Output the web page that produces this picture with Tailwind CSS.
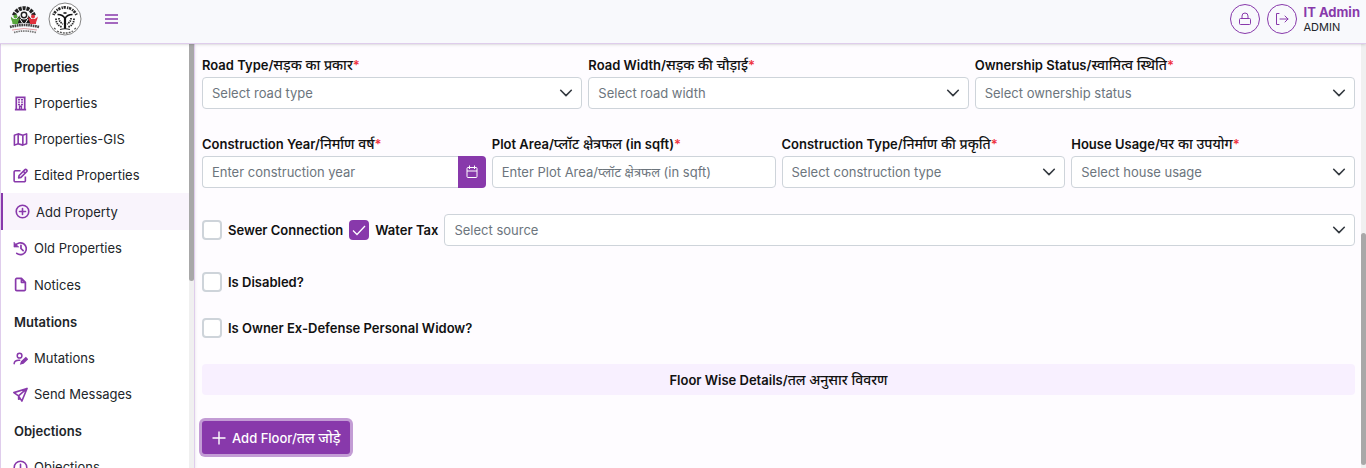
<!DOCTYPE html>
<html lang="en">
<head>
<meta charset="utf-8">
<title>Add Property</title>
<script src="https://cdn.jsdelivr.net/npm/@tailwindcss/browser@4"></script>
</head>
<body class="h-screen overflow-hidden flex flex-col bg-[#fefcff] font-['Inter','Noto_Sans_Devanagari','Noto_Sans',sans-serif] text-[13px] leading-[18px] text-[#212529]">
<svg class="hidden">
  <symbol id="chev" viewBox="0 0 16 16"><path d="M2.7 5.3 8 10.6l5.3-5.3" fill="none" stroke="#343a40" stroke-width="1.6" stroke-linecap="round" stroke-linejoin="round"/></symbol>
</svg>
<header class="relative z-10 h-[44px] shrink-0 flex items-center bg-[#f8f9fc] border-b border-[#dfcdec] shadow-sm pl-2 pr-[6px] pb-[6px]">
  <svg class="w-8 h-8" viewBox="0 0 32 32" role="img" aria-label="Municipal corporation logo">
    <path d="M6 12.500a10.500 10.500 0 0 1 20 0" fill="none" stroke="#222" stroke-width="4" stroke-dasharray="3 .9"/>
    <path d="M8 21c-1-4 2-6 4-9l8 0c2 3 5 5 4 9q-8-2-16 0z" fill="#1b1b1b"/>
    <circle cx="16" cy="12" r="4.600" fill="#fff"/>
    <circle cx="16" cy="12" r="2.700" fill="#fff" stroke="#222" stroke-width="1.500"/>
    <path d="M12 16l2.500 4M20 16l-2.500 4" stroke="#fff" stroke-width="1"/>
    <path d="M3 13.500c1.500 2 2 2.500 4.500 2.500s3-.5 4-2.500c.5 3-1.500 4-1.500 7.500H4.500c0-3.500-2-4.500-1.500-7.500z" fill="#58a63c"/><circle cx="7.500" cy="13.500" r="2" fill="#58a63c"/>
    <path d="M20.500 13.500c1 2 2 2.500 4.500 2.500s3-.5 4.500-2.500c.5 3-1.500 4-1.500 7.500h-6c0-3.500-2-4.500-1.500-7.500z" fill="#e0313c"/><circle cx="25" cy="13.500" r="2" fill="#e0313c"/>
    <path d="M2 24q14-4 29 0" fill="none" stroke="#444" stroke-width="2.600" stroke-dasharray="1.700 .6"/>
    <path d="M4 27q12-3 25 0" fill="none" stroke="#e59aa0" stroke-width="1"/>
    <path d="M6 29.500q10-3 22 0" fill="none" stroke="#777" stroke-width="1.700" stroke-dasharray="1.500 .8"/>
  </svg>
  <svg class="ml-2 w-[34px] h-[34px]" viewBox="0 0 34 34" role="img" aria-label="State emblem" fill="none" stroke="#2a2a2a">
    <circle cx="17" cy="17" r="16" fill="#fff" stroke="#777" stroke-width=".9"/>
    <path d="M5.500 13A12.500 12.500 0 0 1 28.500 13" stroke-width="2.800" stroke-dasharray="1.300 .7 2.300 1.200"/>
    <path d="M17 27V15" stroke="#111" stroke-width="2.200"/>
    <path d="M15.500 11h3M9.500 12.500q5.500 0 7.500 4 2-4 7.500-4" stroke="#111" stroke-width="1.600"/>
    <path d="M12 27.500q5-1.500 10 0" stroke-width="1.200"/>
    <path d="M8 16.500q0 6.500 6 8.500M26 16.500q0 6.500-6 8.500M11 16q0 4 4 6M23 16q0 4-4 6" stroke-width="1.800" stroke-dasharray="1.500 .8"/>
    <path d="M6 26l2 1.500M28 26l-2 1.500M9 29q8 4 16 0" stroke="#555" stroke-width="1.300" stroke-dasharray="2 1"/>
  </svg>
  <button type="button" aria-label="Toggle menu" class="ml-[23px]">
    <svg class="w-[13px] h-[10px]" viewBox="0 0 13 10"><path d="M0 1h13M0 5h13M0 9h13" stroke="#8839ab" stroke-width="1.300"/></svg>
  </button>
  <div class="ml-auto flex items-center gap-[7px]">
    <button type="button" aria-label="Change password" class="w-[30px] h-[30px] rounded-full border border-[#8839ab] flex items-center justify-center">
      <svg class="w-4 h-4" viewBox="0 0 16 16" fill="none" stroke="#8839ab"><rect x="2.500" y="7.500" width="11" height="6" rx="1"/><path d="M5 7.500V5a3 3 0 0 1 6 0v2.500"/></svg>
    </button>
    <button type="button" aria-label="Log out" class="w-[30px] h-[30px] rounded-full border border-[#8839ab] flex items-center justify-center">
      <svg class="w-4 h-4" viewBox="0 0 16 16" fill="none" stroke="#8839ab"><path d="M5 2.500H2.500v11H5M6 8h8M11 5l3 3-3 3" stroke-linecap="round" stroke-linejoin="round"/></svg>
    </button>
    <div class="leading-4"><div class="font-bold text-[#8839ab]">IT Admin</div><div class="text-[11px] leading-[14px]">ADMIN</div></div>
  </div>
</header>

<div class="flex-1 min-h-0 flex">
  <aside class="w-[195px] shrink-0 flex border-x border-[#dfcdec] bg-white shadow-sm overflow-hidden">
    <nav class="flex-1 pt-1 overflow-hidden">
      <h2 class="h-[37px] flex items-center pl-[13px] font-semibold">Properties</h2>
      <a href="#" class="h-9 flex items-center gap-[6px] pl-3"><svg class="w-[15px] h-[15px]" viewBox="0 0 16 16" fill="none" stroke="#8839ab"><path d="M3.500 1.500h9v13h-9zM2 14.500h12" stroke-width="1.800"/><path d="M5.300 4h2.200M8.500 4h2.200M5.300 6.500h2.200M8.500 6.500h2.200M5.300 9h2.200M8.500 9h2.200M7 14v-3h2v3" stroke-width="1.500"/></svg>Properties</a>
      <a href="#" class="h-9 flex items-center gap-[6px] pl-3"><svg class="w-[15px] h-[15px]" viewBox="0 0 16 16" fill="none" stroke="#8839ab" stroke-width="1.700" stroke-linejoin="round"><path d="M1.500 3.500 5.500 2l5 1.500 4-1.500v10.500l-4 1.500-5-1.500-4 1.500zM5.500 2v10.500M10.500 3.500V14"/></svg>Properties-GIS</a>
      <a href="#" class="h-9 flex items-center gap-[6px] pl-3"><svg class="w-[15px] h-[15px]" viewBox="0 0 16 16" fill="none" stroke="#8839ab" stroke-width="1.700" stroke-linejoin="round"><path d="M8 3H2.500A1.200 1.200 0 0 0 1.200 4.200v9.300a1.200 1.200 0 0 0 1.300 1.200h9.500a1.200 1.200 0 0 0 1.200-1.200V9M6 10.500 6.500 8l6-6a1.400 1.400 0 0 1 2 2l-6 6zM11 3.500l2 2"/></svg>Edited Properties</a>
      <a href="#" aria-current="page" class="h-[37px] flex items-center gap-[6px] pl-3 border-l-2 border-[#8839ab] bg-[#f9f4fc]"><svg class="w-[15px] h-[15px]" viewBox="0 0 16 16" fill="none" stroke="#8839ab" stroke-width="1.700" stroke-linecap="round"><circle cx="8" cy="8" r="6.700"/><path d="M8 4.800v6.400M4.800 8h6.400"/></svg>Add Property</a>
      <a href="#" class="h-9 flex items-center gap-[6px] pl-3"><svg class="w-[15px] h-[15px]" viewBox="0 0 16 16" fill="none" stroke="#8839ab" stroke-width="1.800" stroke-linecap="round"><path d="M2.500 5A6.300 6.300 0 1 1 4 13.200M8.500 4.500V8l2.300 2.300"/><path d="M1 1.500v5h5z" fill="#8839ab" stroke-width=".6"/></svg>Old Properties</a>
      <a href="#" class="h-[37px] flex items-center gap-[6px] pl-3"><svg class="w-[15px] h-[15px]" viewBox="0 0 16 16" fill="none" stroke="#8839ab" stroke-width="1.800" stroke-linejoin="round"><path d="M9 1.500H4A1.200 1.200 0 0 0 2.800 2.700v10.600A1.200 1.200 0 0 0 4 14.500h8a1.200 1.200 0 0 0 1.200-1.200V5.700zV5.700h4.200"/></svg>Notices</a>
      <h2 class="h-[37px] flex items-center pl-[13px] font-semibold">Mutations</h2>
      <a href="#" class="h-9 flex items-center gap-[6px] pl-3"><svg class="w-[15px] h-[15px]" viewBox="0 0 16 16" fill="none" stroke="#8839ab" stroke-width="1.600" stroke-linecap="round"><circle cx="7" cy="5" r="2.500"/><path d="M1.200 13.500c.3-3 2.300-4 6-3.700"/><path d="m8.500 13.500.7-2.200 4.500-4 1.500 1.500-4.300 4z" fill="#8839ab"/></svg>Mutations</a>
      <a href="#" class="h-9 flex items-center gap-[6px] pl-3"><svg class="w-[15px] h-[15px]" viewBox="0 0 16 16" fill="none" stroke="#8839ab" stroke-width="1.700" stroke-linejoin="round"><path d="M15 1.500.9 6l5 3.500L9.500 15zM5.900 9.500 15 1.500M6 9.500V13l1.800-1"/></svg>Send Messages</a>
      <h2 class="h-[37px] flex items-center pl-[13px] font-semibold">Objections</h2>
      <a href="#" class="h-9 flex items-center gap-[6px] pl-3"><svg class="w-[15px] h-[15px]" viewBox="0 0 16 16" fill="none" stroke="#8839ab" stroke-width="1.700" stroke-linecap="round"><circle cx="8" cy="8" r="6.700"/><path d="M8 4.500V9M8 11.500v.1"/></svg>Objections</a>
    </nav>
    <div class="w-[5px] bg-[#f0f0f0]"><div class="h-[56%] rounded-b-full bg-[#a8a8a8]"></div></div>
  </aside>

  <main class="flex-1 min-w-0 pt-3 pl-[7px] pr-[6px]">
    <form class="flex flex-col gap-[26px] font-medium text-[#111]">
      <div class="grid grid-cols-3 gap-[6px]">
        <div class="flex flex-col gap-[3px]">
          <label for="rt" class="h-[18px] whitespace-nowrap font-semibold">Road Type/<span lang="hi" class="text-[14px] font-medium">सड़क का प्रकार</span><span class="text-[#ef3340]">*</span></label>
          <div class="relative"><select id="rt" class="w-full h-8 appearance-none rounded border border-[#ced4da] bg-white pl-[9px] pr-8 font-normal text-[#6c757d]"><option>Select road type</option></select><svg class="absolute right-2 top-2 w-4 h-4 pointer-events-none"><use href="#chev"/></svg></div>
        </div>
        <div class="flex flex-col gap-[3px]">
          <label for="rw" class="h-[18px] whitespace-nowrap font-semibold">Road Width/<span lang="hi" class="text-[14px] font-medium">सड़क की चौड़ाई</span><span class="text-[#ef3340]">*</span></label>
          <div class="relative"><select id="rw" class="w-full h-8 appearance-none rounded border border-[#ced4da] bg-white pl-[9px] pr-8 font-normal text-[#6c757d]"><option>Select road width</option></select><svg class="absolute right-2 top-2 w-4 h-4 pointer-events-none"><use href="#chev"/></svg></div>
        </div>
        <div class="flex flex-col gap-[3px]">
          <label for="os" class="h-[18px] whitespace-nowrap font-semibold">Ownership Status/<span lang="hi" class="text-[14px] font-medium">स्वामित्व स्थिति</span><span class="text-[#ef3340]">*</span></label>
          <div class="relative"><select id="os" class="w-full h-8 appearance-none rounded border border-[#ced4da] bg-white pl-[9px] pr-8 font-normal text-[#6c757d]"><option>Select ownership status</option></select><svg class="absolute right-2 top-2 w-4 h-4 pointer-events-none"><use href="#chev"/></svg></div>
        </div>
      </div>

      <div class="grid grid-cols-4 gap-[6px]">
        <div class="flex flex-col gap-[3px]">
          <label for="cy" class="h-[18px] whitespace-nowrap font-semibold">Construction Year/<span lang="hi" class="text-[14px] font-medium">निर्माण वर्ष</span><span class="text-[#ef3340]">*</span></label>
          <div class="flex"><input id="cy" type="text" placeholder="Enter construction year" class="flex-1 min-w-0 h-8 rounded-l border border-r-0 border-[#ced4da] bg-white px-[9px] font-normal placeholder:text-[#6c757d]"><button type="button" aria-label="Choose year" class="w-7 h-8 rounded-r bg-[#8839ab] flex items-center justify-center"><svg class="w-[14px] h-[14px]" viewBox="0 0 14 14" fill="none" stroke="#fff"><rect x="2" y="2.500" width="10" height="10" rx="1"/><path d="M2 6h10M4.500 .5v3.500M9.500 .5v3.500"/></svg></button></div>
        </div>
        <div class="flex flex-col gap-[3px]">
          <label for="pa" class="h-[18px] whitespace-nowrap font-semibold">Plot Area/<span lang="hi" class="text-[14px] font-medium">प्लॉट क्षेत्रफल</span> (in sqft)<span class="text-[#ef3340]">*</span></label>
          <input id="pa" type="text" placeholder="Enter Plot Area/प्लॉट क्षेत्रफल (in sqft)" class="w-full h-8 rounded border border-[#ced4da] bg-white px-[9px] font-normal placeholder:text-[#6c757d]">
        </div>
        <div class="flex flex-col gap-[3px]">
          <label for="ct" class="h-[18px] whitespace-nowrap font-semibold">Construction Type/<span lang="hi" class="text-[14px] font-medium">निर्माण की प्रकृति</span><span class="text-[#ef3340]">*</span></label>
          <div class="relative"><select id="ct" class="w-full h-8 appearance-none rounded border border-[#ced4da] bg-white pl-[9px] pr-8 font-normal text-[#6c757d]"><option>Select construction type</option></select><svg class="absolute right-2 top-2 w-4 h-4 pointer-events-none"><use href="#chev"/></svg></div>
        </div>
        <div class="flex flex-col gap-[3px]">
          <label for="hu" class="h-[18px] whitespace-nowrap font-semibold">House Usage/<span lang="hi" class="text-[14px] font-medium">घर का उपयोग</span><span class="text-[#ef3340]">*</span></label>
          <div class="relative"><select id="hu" class="w-full h-8 appearance-none rounded border border-[#ced4da] bg-white pl-[9px] pr-8 font-normal text-[#6c757d]"><option>Select house usage</option></select><svg class="absolute right-2 top-2 w-4 h-4 pointer-events-none"><use href="#chev"/></svg></div>
        </div>
      </div>

      <div class="flex items-center gap-[6px]">
        <label class="flex items-center gap-[6px] font-semibold"><input type="checkbox" class="appearance-none w-5 h-5 rounded border-2 border-[#ced4da] bg-white">Sewer Connection</label>
        <label class="flex items-center gap-[6px] font-semibold"><span class="relative flex"><input type="checkbox" checked class="appearance-none w-5 h-5 rounded bg-[#8839ab]"><svg class="absolute inset-0 w-5 h-5 pointer-events-none" viewBox="0 0 20 20"><path d="m4 10.500 4 4 8-8.500" fill="none" stroke="#fff" stroke-width="1.300"/></svg></span>Water Tax</label>
        <div class="relative flex-1"><select aria-label="Water source" class="w-full h-8 appearance-none rounded border border-[#ced4da] bg-white pl-[9px] pr-8 font-normal text-[#6c757d]"><option>Select source</option></select><svg class="absolute right-2 top-2 w-4 h-4 pointer-events-none"><use href="#chev"/></svg></div>
      </div>
      <label class="flex items-center gap-[6px] font-semibold"><input type="checkbox" class="appearance-none w-5 h-5 rounded border-2 border-[#ced4da] bg-white">Is Disabled?</label>
      <label class="flex items-center gap-[6px] font-semibold"><input type="checkbox" class="appearance-none w-5 h-5 rounded border-2 border-[#ced4da] bg-white">Is Owner Ex-Defense Personal Widow?</label>
      <h3 class="h-[31px] flex items-center justify-center rounded bg-[#f8f0ff] font-semibold"><span>Floor Wise Details/<span lang="hi" class="text-[14px] font-medium">तल अनुसार विवरण</span></span></h3>
      <button type="button" class="self-start h-[33px] rounded-[3px] bg-[#8839ab] ring-3 ring-[#c39cd5] px-[10px] flex items-center gap-[6px] text-white whitespace-nowrap"><svg class="w-[14px] h-[14px]" viewBox="0 0 14 14"><path d="M7 .5v13M.5 7h13" stroke="#fff" stroke-width="1.400"/></svg><span>Add Floor/<span lang="hi" class="text-[14px]">तल जोड़े</span></span></button>
    </form>
  </main>
  <div class="w-[5px] shrink-0 flex flex-col justify-end pb-[3px] bg-[#f0f0f0]"><div class="h-[55%] rounded-full bg-[#a8a8a8]"></div></div>
</div>
</body>
</html>
